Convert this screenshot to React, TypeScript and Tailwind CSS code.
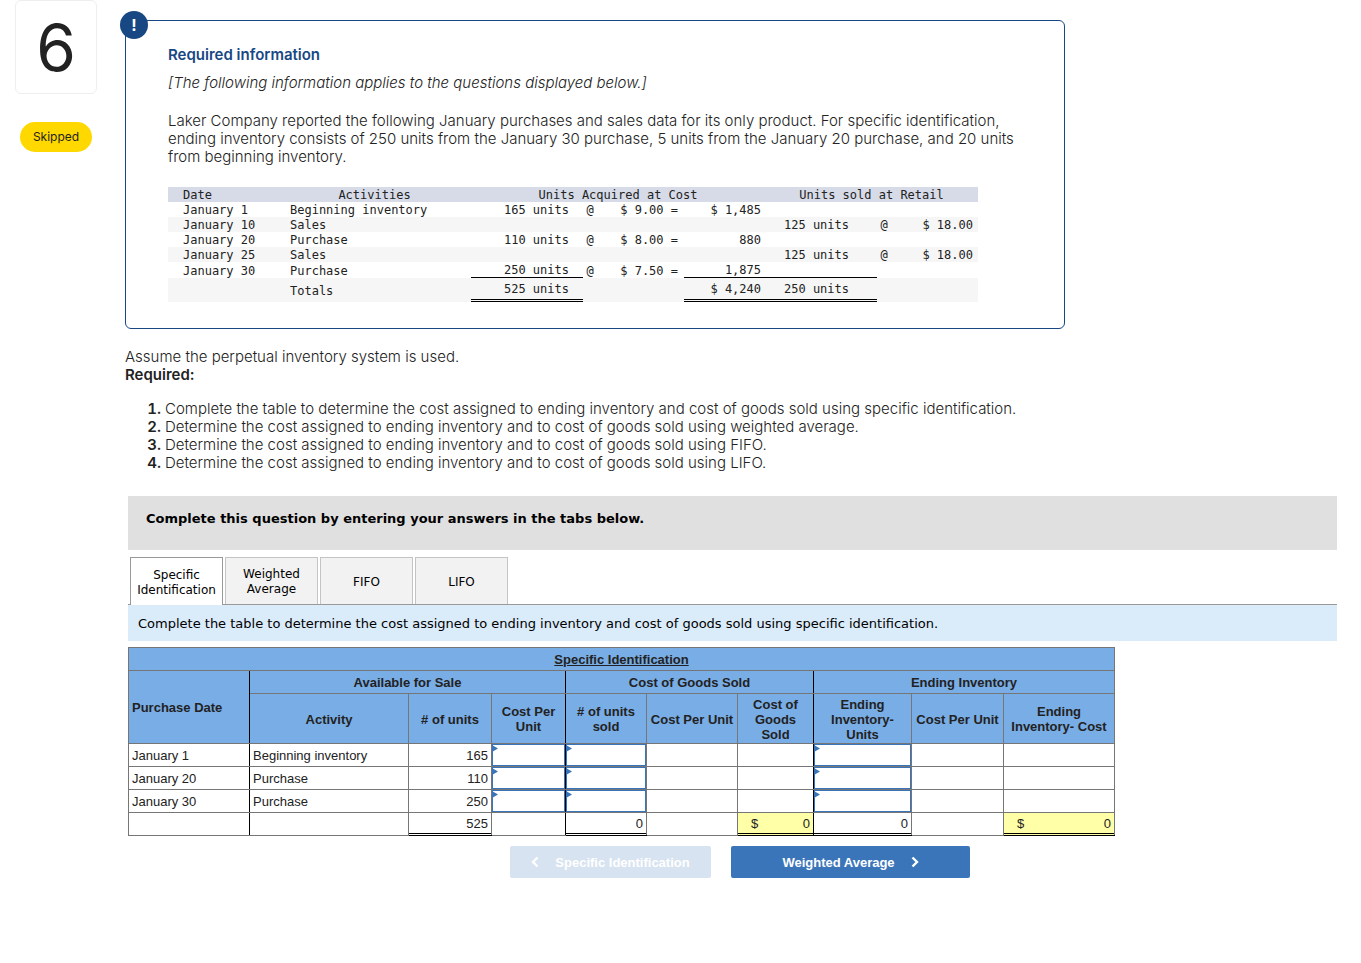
import React, { useState } from 'react';
import clsx from 'clsx';

type Transaction = {
  date: string;
  activity: string;
  acquired?: string;
  cost?: string;
  total?: string;
  sold?: string;
  retail?: string;
};

const transactions: Transaction[] = [
  { date: 'January 1', activity: 'Beginning inventory', acquired: '165 units', cost: '$ 9.00 =', total: '$ 1,485' },
  { date: 'January 10', activity: 'Sales', sold: '125 units', retail: '$ 18.00' },
  { date: 'January 20', activity: 'Purchase', acquired: '110 units', cost: '$ 8.00 =', total: '880' },
  { date: 'January 25', activity: 'Sales', sold: '125 units', retail: '$ 18.00' },
  { date: 'January 30', activity: 'Purchase', acquired: '250 units', cost: '$ 7.50 =', total: '1,875' },
];

const requirements = [
  'Complete the table to determine the cost assigned to ending inventory and cost of goods sold using specific identification.',
  'Determine the cost assigned to ending inventory and to cost of goods sold using weighted average.',
  'Determine the cost assigned to ending inventory and to cost of goods sold using FIFO.',
  'Determine the cost assigned to ending inventory and to cost of goods sold using LIFO.',
];

const tabs = ['Specific Identification', 'Weighted Average', 'FIFO', 'LIFO'];

const purchases = [
  { date: 'January 1', activity: 'Beginning inventory', units: 165 },
  { date: 'January 20', activity: 'Purchase', units: 110 },
  { date: 'January 30', activity: 'Purchase', units: 250 },
];

const cell = 'border border-[#767676] p-0';
const headCell = 'border border-[#767676] px-[3px] pb-0 pt-px font-bold';
const divider = 'border-r-black';

const TransactionTable = () => (
  <table className="w-[810px] table-fixed border-separate border-spacing-0 font-['DejaVu_Sans_Mono',monospace] text-xs leading-[14px] [&_td]:pt-px [&_th]:pt-px">
    <colgroup>
      <col className="w-[108px]" />
      <col className="w-[195px]" />
      <col className="w-[112px]" />
      <col className="w-[14px]" />
      <col className="w-[87px]" />
      <col className="w-[81px]" />
      <col className="w-[112px]" />
      <col className="w-[14px]" />
      <col />
    </colgroup>
    <thead>
      <tr className="bg-[#d6dbe7]">
        <th className="p-0 pl-[15px] text-left font-normal">Date</th>
        <th className="p-0 pl-0.5 font-normal">Activities</th>
        <th colSpan={4} className="p-0 font-normal">Units Acquired at Cost</th>
        <th colSpan={3} className="p-0 font-normal">Units sold at Retail</th>
      </tr>
    </thead>
    <tbody>
      {transactions.map((t, i) => {
        const last = i === transactions.length - 1;
        const line = last && 'border-b border-black';
        return (
          <tr key={t.date} className={clsx(i % 2 === 1 && 'bg-[#f6f6f6]', last ? 'h-4' : 'h-[15px]')}>
            <td className="p-0 pl-[15px]">{t.date}</td>
            <td className="p-0 pl-[14px]">{t.activity}</td>
            <td className={clsx('p-0 pr-[14px] text-right', line)}>{t.acquired}</td>
            <td className="p-0 text-center">{t.acquired && '@'}</td>
            <td className="p-0 pr-[6px] text-right">{t.cost}</td>
            <td className={clsx('p-0 pr-1 text-right', line)}>{t.total}</td>
            <td className={clsx('p-0 pr-7 text-right', line)}>{t.sold}</td>
            <td className="p-0 text-center">{t.sold && '@'}</td>
            <td className="p-0 pr-[5px] text-right">{t.retail}</td>
          </tr>
        );
      })}
      <tr className="h-6 bg-[#f6f6f6]">
        <td className="p-0"></td>
        <td className="p-0 pl-[14px]">Totals</td>
        <td className="border-b-[3px] border-double border-black p-0 pr-[14px] text-right">525 units</td>
        <td className="p-0"></td>
        <td className="p-0"></td>
        <td className="border-b-[3px] border-double border-black p-0 pr-1 text-right">$ 4,240</td>
        <td className="border-b-[3px] border-double border-black p-0 pr-7 text-right">250 units</td>
        <td className="p-0"></td>
        <td className="p-0"></td>
      </tr>
    </tbody>
  </table>
);

const AnswerInput = ({ label }: { label: string }) => (
  <div className="relative">
    <input
      type="text"
      aria-label={label}
      className="block h-[22px] w-full border border-[#3a75ba] bg-white px-1 text-right outline-none"
    />
    <svg className="pointer-events-none absolute left-0 top-0" width="6" height="8" viewBox="0 0 6 8">
      <path d="M0 1L6 4.5L0 8Z" fill="#3a75ba" />
    </svg>
  </div>
);

// Total with a double rule under it, the lower rule is the cell border
const Total = ({ value, money }: { value: number; money?: boolean }) => (
  <div className="mb-px flex h-[21px] items-center justify-between border-b border-black pr-[3px] pt-px">
    <span className="pl-[13px]">{money && '$'}</span>
    <span>{value}</span>
  </div>
);

const totalCell = 'border border-[#767676] border-y-black p-0';

const AnswerTable = () => (
  <table className="w-[987px] table-fixed border-collapse font-['Liberation_Sans',Arial,sans-serif] text-[13px] leading-[15px]">
    <colgroup>
      <col className="w-[121px]" />
      <col className="w-[159px]" />
      <col className="w-[83px]" />
      <col className="w-[74px]" />
      <col className="w-[81px]" />
      <col className="w-[91px]" />
      <col className="w-[76px]" />
      <col className="w-[98px]" />
      <col className="w-[92px]" />
      <col />
    </colgroup>
    <thead className="bg-[#79ade6]">
      <tr className="h-[23px]">
        <th colSpan={10} className={clsx(headCell, 'underline')}>Specific Identification</th>
      </tr>
      <tr className="h-[23px]">
        <th rowSpan={2} className={clsx(headCell, divider, 'text-left')}>Purchase Date</th>
        <th colSpan={3} className={clsx(headCell, divider)}>Available for Sale</th>
        <th colSpan={3} className={clsx(headCell, divider)}>Cost of Goods Sold</th>
        <th colSpan={3} className={headCell}>Ending Inventory</th>
      </tr>
      <tr className="h-[50px]">
        <th className={headCell}>Activity</th>
        <th className={headCell}># of units</th>
        <th className={clsx(headCell, divider)}>Cost Per Unit</th>
        <th className={headCell}># of units sold</th>
        <th className={headCell}>Cost Per Unit</th>
        <th className={clsx(headCell, divider)}>Cost of Goods Sold</th>
        <th className={headCell}>Ending Inventory- Units</th>
        <th className={headCell}>Cost Per Unit</th>
        <th className={headCell}>Ending Inventory- Cost</th>
      </tr>
    </thead>
    <tbody>
      {purchases.map((p) => (
        <tr key={p.date} className="h-[23px]">
          <td className={clsx(cell, divider, 'pl-[3px] pt-px')}>{p.date}</td>
          <td className={clsx(cell, 'pl-[3px] pt-px')}>{p.activity}</td>
          <td className={clsx(cell, 'pr-[3px] pt-px text-right')}>{p.units}</td>
          <td className={clsx(cell, divider)}>
            <AnswerInput label={`${p.date} cost per unit`} />
          </td>
          <td className={cell}>
            <AnswerInput label={`${p.date} units sold`} />
          </td>
          <td className={cell}></td>
          <td className={clsx(cell, divider)}></td>
          <td className={cell}>
            <AnswerInput label={`${p.date} ending inventory units`} />
          </td>
          <td className={cell}></td>
          <td className={cell}></td>
        </tr>
      ))}
      <tr className="h-[23px]">
        <td className={clsx(cell, divider)}></td>
        <td className={cell}></td>
        <td className={totalCell}><Total value={525} /></td>
        <td className={clsx(cell, divider)}></td>
        <td className={totalCell}><Total value={0} /></td>
        <td className={cell}></td>
        <td className={clsx(totalCell, divider, 'bg-[#ffffa8]')}><Total value={0} money /></td>
        <td className={totalCell}><Total value={0} /></td>
        <td className={cell}></td>
        <td className={clsx(totalCell, 'bg-[#ffffa8]')}><Total value={0} money /></td>
      </tr>
    </tbody>
  </table>
);

const Chevron = ({ d }: { d: string }) => (
  <svg width="8" height="12" viewBox="0 0 8 12" fill="none" stroke="currentColor" strokeWidth="2.4">
    <path d={d} />
  </svg>
);

const App = () => {
  const [active, setActive] = useState(0);

  return (
    <div className="flex bg-white pr-6 font-[Inter,sans-serif] text-[15px] font-light leading-[18px] text-[#222]">
      <aside className="w-[125px] shrink-0 pl-[15px]">
        <div className="flex h-[94px] w-[82px] items-center justify-center rounded-md border border-[#eee] pt-0.5 text-[64px] font-normal">
          6
        </div>
        <span className="ml-[5px] mt-7 flex h-[30px] w-[72px] items-center justify-center rounded-full bg-[#ffd800] text-xs font-normal">
          Skipped
        </span>
      </aside>

      <main className="min-w-0 flex-1">
        <section className="relative mt-5 max-w-[940px] rounded-md border border-[#174884] px-[42px] pb-[26px] pt-[25px]">
          <span className="absolute -left-1.5 -top-2.5 flex h-7 w-7 items-center justify-center rounded-full bg-[#174884] text-base font-bold text-white">
            !
          </span>
          <h2 className="font-semibold text-[#174884]">Required information</h2>
          <p className="mt-2.5 italic">[The following information applies to the questions displayed below.]</p>
          <p className="mb-[21px] mt-5">
            Laker Company reported the following January purchases and sales data for its only product. For specific
            identification, ending inventory consists of 250 units from the January 30 purchase, 5 units from the
            January 20 purchase, and 20 units from beginning inventory.
          </p>
          <TransactionTable />
        </section>

        <p className="mt-[19px]">Assume the perpetual inventory system is used.</p>
        <p className="font-semibold">Required:</p>
        <ol className="mt-4 list-decimal pl-10 marker:font-semibold">
          {requirements.map((text) => (
            <li key={text}>{text}</li>
          ))}
        </ol>

        <div className="ml-[3px] mt-6 font-['DejaVu_Sans',Verdana,sans-serif] text-[13px] font-normal leading-[15px] text-black">
          <div className="bg-[#e0e0e0] px-[18px] pb-6 pt-[15px] font-bold">
            Complete this question by entering your answers in the tabs below.
          </div>

          <div role="tablist" className="mt-[7px] flex gap-0.5 border-b border-[#999] pl-0.5 text-xs leading-[15px]">
            {tabs.map((tab, i) => (
              <button
                key={tab}
                role="tab"
                aria-selected={i === active}
                onClick={() => setActive(i)}
                className={clsx(
                  'w-[93px] border border-b-0 pt-0.5',
                  i === active ? '-mb-px h-12 border-[#999] bg-white' : 'h-[47px] border-[#c4c4c4] bg-[#f2f2f2]'
                )}
              >
                {tab}
              </button>
            ))}
          </div>

          <p className="mb-1.5 bg-[#daebfa] px-2.5 pb-2.5 pt-[11px]">
            Complete the table to determine the cost assigned to ending inventory and cost of goods sold using specific
            identification.
          </p>

          <div className="text-[#222]">
            <AnswerTable />
          </div>

          <div className="ml-[382px] mt-2.5 flex gap-5 font-['Liberation_Sans',Arial,sans-serif] text-[13px] font-bold text-white">
            <button disabled className="flex h-8 w-[201px] items-center justify-center gap-4 rounded-xs bg-[#d7e3f1]">
              <Chevron d="M6.5 1.5L2 6L6.5 10.5" />
              Specific Identification
            </button>
            <button
              onClick={() => setActive(1)}
              className="flex h-8 w-[239px] items-center justify-center gap-4 rounded-xs bg-[#3a75ba]"
            >
              Weighted Average
              <Chevron d="M1.5 1.5L6 6L1.5 10.5" />
            </button>
          </div>
        </div>
      </main>
    </div>
  );
};

export default App;
